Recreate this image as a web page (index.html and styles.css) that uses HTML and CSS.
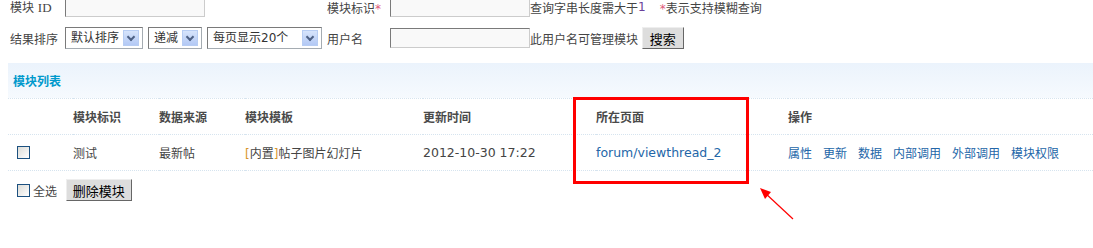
FILE: index.html
```html
<!DOCTYPE html>
<html lang="zh-CN">
<head>
    <meta charset="UTF-8">
    <title>模块管理</title>
    <link rel="stylesheet" href="styles.css">
</head>
<body>

<form class="search">
    <label class="lbl">模块 <span class="latin">ID</span></label>
    <div class="cell"><input type="text" class="txt"></div>
    <label class="lbl">模块标识<span class="star">*</span></label>
    <input type="text" class="txt">
    <div class="note">查询字串长度需大于<span class="one">1</span> <span class="hint"><span class="star">*</span>表示支持模糊查询</span></div>

    <label class="lbl">结果排序</label>
    <div class="cell">
        <div class="sel w78">默认排序<i class="arrow"></i></div>
        <div class="sel w54">递减<i class="arrow"></i></div>
        <div class="sel w115">每页显示20个<i class="arrow"></i></div>
    </div>
    <label class="lbl">用户名</label>
    <input type="text" class="txt">
    <div class="note">此用户名可管理模块 <button type="button" class="btn">搜索</button></div>
</form>

<table class="tb">
    <colgroup>
        <col style="width:65px">
        <col style="width:86px">
        <col style="width:86px">
        <col style="width:178px">
        <col style="width:173px">
        <col style="width:192px">
        <col>
    </colgroup>
    <tr class="title">
        <td colspan="7">模块列表</td>
    </tr>
    <tr class="header">
        <td></td>
        <td>模块标识</td>
        <td>数据来源</td>
        <td>模块模板</td>
        <td>更新时间</td>
        <td>所在页面</td>
        <td>操作</td>
    </tr>
    <tr class="row">
        <td class="chk"><input type="checkbox"></td>
        <td>测试</td>
        <td>最新帖</td>
        <td><span class="brk">[</span>内置<span class="brk">]</span>帖子图片幻灯片</td>
        <td class="latin-s">2012-10-30 17:22</td>
        <td><a href="#" class="latin-s">forum/viewthread_2</a></td>
        <td class="ops">
            <a href="#">属性</a><a href="#">更新</a><a href="#">数据</a><a href="#">内部调用</a><a href="#">外部调用</a><a href="#">模块权限</a>
        </td>
    </tr>
    <tr class="foot">
        <td colspan="7">
            <label class="all"><input type="checkbox">全选</label>
            <button type="button" class="btn">删除模块</button>
        </td>
    </tr>
</table>

<div class="mark"></div>
<svg class="pointer" width="50" height="40" viewBox="0 0 50 40">
    <line x1="38" y1="34" x2="9" y2="7" stroke="#f00" stroke-width="1.2"/>
    <polygon points="5,3 16,7 10,14" fill="#f00"/>
</svg>

</body>
</html>
```

FILE: styles.css
```css
* {
    box-sizing: border-box;
}
body {
    margin: 0;
    position: relative;
    width: 1093px;
    height: 248px;
    overflow: hidden;
    background: #fff;
    color: #444;
    font: 12px "DejaVu Sans", "Noto Sans CJK SC", sans-serif;
}
.latin {
    font-family: "Liberation Serif", serif;
    font-size: 13px;
}
.search {
    margin: -5px 0 0 10px;
    display: grid;
    grid-template-columns: 55px 262px 63px 140px auto;
    grid-auto-rows: 24px;
    row-gap: 7px;
    align-items: center;
}
.lbl {
    white-space: nowrap;
}
.cell {
    display: flex;
    align-items: center;
    gap: 5px;
}
.star {
    color: #e05a7a;
}
.one {
    color: #6a3f99;
}
.hint {
    margin-left: 14px;
}
.note {
    display: flex;
    align-items: center;
    white-space: pre;
}
.txt {
    width: 140px;
    height: 20px;
    margin: 0;
    padding: 0 2px;
    border: 1px solid #ccc;
    border-top-color: #7a7a7a;
    border-left-color: #7a7a7a;
    background: #f9f9f9;
}
.sel {
    position: relative;
    height: 22px;
    line-height: 20px;
    padding-left: 5px;
    border: 1px solid #a5acb2;
    border-top-color: #7a7a7a;
    border-left-color: #7a7a7a;
    background: #fff;
    color: #333;
}
.w78 { width: 78px; }
.w54 { width: 54px; }
.w115 { width: 115px; }
.arrow {
    position: absolute;
    right: 3px;
    top: 2px;
    width: 16px;
    height: 16px;
    border: 1px solid #b7cdf3;
    background: linear-gradient(#d6e4fb, #b3c9f5);
}
.arrow::after {
    content: "";
    position: absolute;
    left: 4px;
    top: 3px;
    width: 4px;
    height: 4px;
    border-right: 2px solid #4d6185;
    border-bottom: 2px solid #4d6185;
    transform: rotate(45deg);
}
.btn {
    height: 22px;
    margin: 0;
    padding: 0 7px;
    font: 13px "Noto Sans CJK SC", sans-serif;
    color: #000;
    background: #ddd;
    border: 1px solid;
    border-color: #eee #666 #666 #eee;
    cursor: pointer;
}
.tb {
    margin: 13px 0 0 8px;
    width: 1085px;
    table-layout: fixed;
    border-collapse: collapse;
}
.tb td {
    padding: 0;
    white-space: nowrap;
}
.title td {
    height: 35px;
    padding-left: 5px;
    color: #09c;
    font-weight: bold;
    background: linear-gradient(#ebf3fc, #f6fafe);
    border-bottom: 1px dotted #d6e4ef;
}
.header td {
    height: 36px;
    font-weight: bold;
    color: #4a4a4a;
    border-bottom: 1px dotted #d6e4ef;
}
.row td {
    height: 36px;
    border-bottom: 1px dotted #d6e4ef;
}
.latin-s {
    font-size: 12.5px;
}
.brk {
    color: #d8962e;
}
.chk {
    padding-left: 9px !important;
}
input[type=checkbox] {
    appearance: none;
    width: 13px;
    height: 13px;
    margin: 0;
    vertical-align: middle;
    border: 1px solid #1c5180;
    background: linear-gradient(135deg, #dcdcd7, #fff);
}
a {
    color: #2366a8;
    text-decoration: none;
}
.ops a {
    margin-right: 11px;
}
.foot td {
    height: 40px;
    padding-left: 9px;
}
.all {
    display: inline-flex;
    align-items: center;
    gap: 3px;
    margin-right: 5px;
    vertical-align: middle;
}
.foot .btn {
    vertical-align: middle;
    padding: 0 6px;
}
.mark {
    position: absolute;
    left: 573px;
    top: 97px;
    width: 176px;
    height: 87px;
    border: 3px solid #f00;
}
.pointer {
    position: absolute;
    left: 755px;
    top: 185px;
}
```
